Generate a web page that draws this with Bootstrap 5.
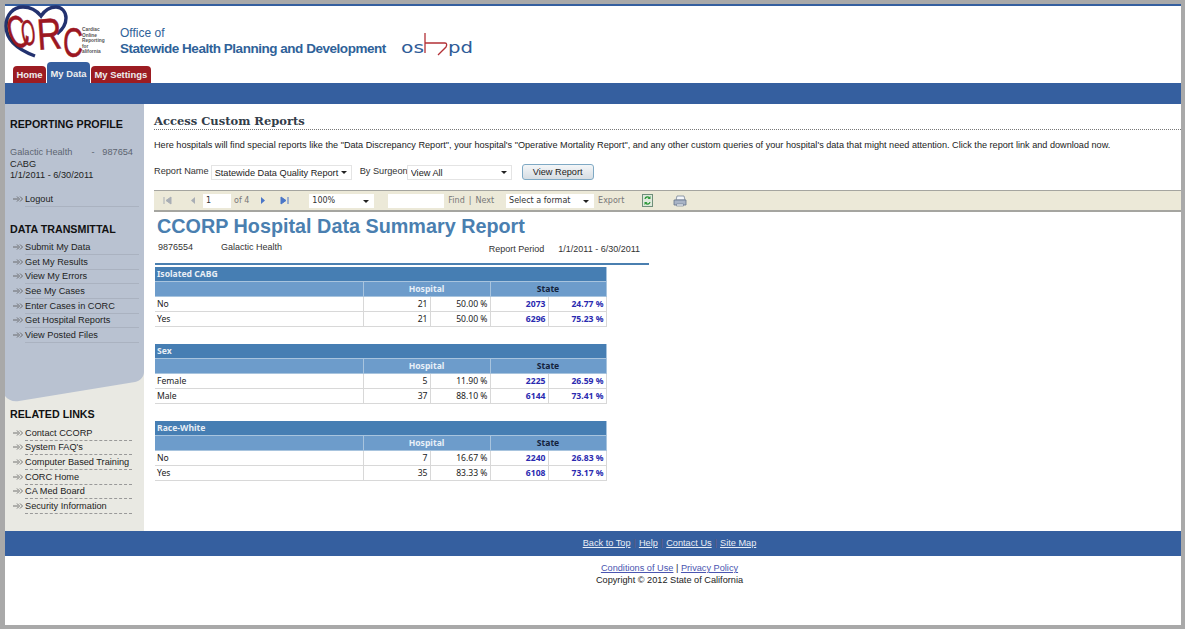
<!DOCTYPE html>
<html lang="en">
<head>
  <meta charset="UTF-8" />
  <title>CORC – Access Custom Reports</title>
  <link href="https://cdn.jsdelivr.net/npm/bootstrap@5.3.3/dist/css/bootstrap.min.css" rel="stylesheet" />
  <style>
    html, body { height: 100%; margin: 0; overflow: hidden; }
    body {
      background: #fff;
      font-family: "Liberation Sans", Arial, sans-serif;
      font-size: 9.2px;
      line-height: 1.2;
      color: #222;
    }
    .page-frame {
      height: 629px;
      border: solid #a9a9a9;
      border-width: 4px 4px 4px 5px;
    }
    .top-line { height: 2px; background: #355f9f; }
    .brand-row { height: 56px; }
    .office-title { margin-left: 15px; padding-top: 20px; color: #2f6299; font-size: 12px; line-height: 15px; }
    .office-title b { font-size: 13.5px; letter-spacing: -.47px; display: block; }
    .oshpd-logo { margin-left: 15px; margin-top: 27px; }
    .tab-row { height: 21px; padding-left: 8px; gap: 1px; align-items: flex-end; }
    .tab-link {
      display: block;
      height: 17px;
      padding: 3px 3.5px 0;
      background: #9c1c22;
      color: #eee;
      font-weight: 700;
      font-size: 9.4px;
      text-decoration: none;
      border-radius: 4px 4px 0 0;
    }
    .tab-link.tab-on { height: 21px; padding-top: 6px; background: #355f9f; }
    .blue-band { height: 21px; background: #355f9f; }
    .main-row { height: 427px; }
    .side-col { width: 139px; flex: none; background: #e9e9e3; }
    .side-blue { background: #b9c2d1; height: 264px; padding: 14px 5px 0; }
    .side-curve { display: block; margin-bottom: 6px; }
    .side-head { font-size: 10.7px; font-weight: 700; color: #111; margin: 0; line-height: 13px; }
    .profile-txt { margin-top: 16px; line-height: 11.5px; color: #222; }
    .profile-txt .dim { color: #5c6470; display: flex; justify-content: space-between; width: 123px; }
    .side-links { list-style: none; margin: 0; padding: 0; }
    .logout-list { margin-top: 11px; }
    .side-links li { display: flex; align-items: flex-end; height: 14.7px; }
    .side-links svg { flex: none; margin: 0 2px 5px 3px; }
    .side-links a {
      flex: 1;
      color: #222;
      text-decoration: none;
      padding-bottom: 1px;
      border-bottom: 1px solid #aab2c0;
      line-height: 12px;
    }
    .side-related { padding: 0 5px; }
    .side-related ul { margin-top: 5px; }
    .side-related a { border-bottom: 1px dashed #999; margin-right: 7px; }
    .report-col { flex: 1; min-width: 0; padding: 10px 0 0 10px; }
    .page-head {
      font-family: "DejaVu Serif", "Liberation Serif", serif;
      font-weight: 700;
      font-size: 11.5px;
      line-height: 14px;
      color: #333d4a;
      margin: 0;
      padding-bottom: 1px;
      border-bottom: 1px dotted #777;
    }
    .intro-txt { margin: 9px 0 0; font-size: 9.14px; line-height: 12px; color: #222; white-space: nowrap; }
    .filter-row { margin-top: 13px; height: 16px; color: #333; }
    .plain-select.form-select {
      height: 15px;
      padding: 0 3px;
      font-family: "Liberation Sans", Arial, sans-serif;
      font-size: 9.2px;
      line-height: 14px;
      color: #222;
      border: 1px solid #e4e4e4;
      border-radius: 0;
      background-image: none;
    }
    .sel-report { width: 141px; }
    .sel-surgeon { width: 105px; }
    .report-label { margin-right: 2px; }
    .surgeon-label { margin-left: 8px; margin-right: -1px; }
    .select-box { position: relative; display: block; }
    .select-box::after {
      content: "";
      position: absolute;
      right: 5px;
      top: 6px;
      border: 3px solid transparent;
      border-top: 3px solid #222;
      border-bottom: 0;
      pointer-events: none;
    }
    .view-btn.btn {
      width: 72px;
      height: 16px;
      padding: 0;
      margin-left: 10px;
      font-size: 9.2px;
      line-height: 13px;
      color: #222;
      border: 1px solid #7fa9c4;
      border-radius: 3px;
      background: linear-gradient(#f4f6f8, #d6dde3);
    }
    .tool-strip {
      margin-top: 10px;
      height: 22px;
      background: #ece9d8;
      border-top: 1px solid #a5a5a0;
      border-bottom: 2px solid #a5a5a0;
      color: #777;
      font-family: "DejaVu Sans", sans-serif;
      font-size: 8px;
      padding-left: 9px;
    }
    .tool-input { display: block; background: #fff; height: 14px; line-height: 14px; padding-left: 3px; color: #333; }
    .tool-input.page-no { width: 28px; margin: 0 3px 0 7px; }
    .tool-input.find-box { width: 56px; margin-left: 14px; margin-right: 4px; }
    .tool-select { position: relative; width: 65px; margin-left: 20px; }
    .tool-select.fmt-select { width: 88px; margin-left: 12px; }
    .tool-select::after {
      content: "";
      position: absolute;
      right: 5px;
      top: 6px;
      border: 3px solid transparent;
      border-top: 3px solid #222;
      border-bottom: 0;
    }
    .step-prev { margin-left: 18px; }
    .step-next { margin-left: 11px; }
    .step-last { margin-left: 14px; }
    .tool-refresh { margin-left: 18px; }
    .tool-print { margin-left: 20px; }
    .report-title { margin: 2px 0 0 3px; font-size: 19.8px; line-height: 24px; font-weight: 700; color: #4a7fb0; }
    .report-meta {
      width: 494px;
      margin-left: 1px;
      height: 27px;
      padding: 4px 9px 0 3px;
      font-size: 9px;
      color: #333;
      border-bottom: 2px solid #4a7fb0;
    }
    .meta-name { margin-left: 28px; }
    .meta-period { margin-top: 2px; }
    .meta-dates { margin-left: 14px; }
    .rpt-table.table {
      width: 451px;
      margin: 2px 0 17px 1px;
      table-layout: fixed;
      border-collapse: collapse;
      font-family: "Noto Sans", sans-serif;
      color: #222;
    }
    .rpt-table.table th, .rpt-table.table td {
      height: 15px;
      padding: 0 2px;
      line-height: 14px;
      border: solid #d8d8d8;
      border-width: 0 1px 1px 0;
      box-shadow: none;
      background: transparent;
      color: inherit;
      white-space: nowrap;
      font-size: 8.6px;
    }
    .rpt-table.table .rpt-title th { height: 14px; background: #467eb3; color: #e8eef5; font-weight: 700; border-color: #a8c4de; }
    .rpt-table.table .rpt-head th { background: #6d9ccb; color: #e8f0f8; text-align: center; border-color: #a8c4de; }
    .rpt-table.table .rpt-head th.state-col { color: #14233c; }
    .rpt-table.table td.num { text-align: right; }
    .rpt-table.table td.state-num { text-align: right; color: #2a2ab0; font-weight: 700; }
    .wid-label { width: 208px; }
    .wid-count { width: 67px; }
    .wid-pct { width: 60px; }
    .wid-state { width: 58px; }
    .foot-band {
      height: 25px;
      background: #355f9f;
      padding-left: 153px;
      gap: 3px;
      color: #6c5a78;
    }
    .foot-band a { color: #e9eef6; }
    .foot-legal { text-align: center; padding: 7px 0 0 153px; line-height: 11.5px; color: #222; }
    .foot-legal a { color: #4a55b0; }
  </style>
</head>
<body>
  <div class="page-frame d-flex flex-column">
    <div class="top-line"></div>

    <!-- logo row -->
    <div class="brand-row d-flex align-items-start">
      <svg class="overflow-visible" width="100" height="56" viewBox="0 0 100 56" aria-label="CORC logo">
        <path d="M30 50C14 44 1 34 1 20 1 9 8 1 18 1 26 1 32 5 36 10 40 4 46 1 51 1 57 1 61 6 61 12 61 18 57 24 52 28" fill="none" stroke="#23326f" stroke-width="3.4"/>
        <g font-family="Liberation Sans, sans-serif" fill="#9c1722" stroke="#9c1722" stroke-width=".5">
          <text transform="translate(8 44) rotate(-18) scale(.6 1)" font-size="46">C</text>
          <text transform="translate(18 40) rotate(-8) scale(.5 1)" font-size="36">O</text>
          <text transform="translate(33 44) rotate(-4) scale(.78 1)" font-size="44">R</text>
          <text transform="translate(58 51) scale(.66 1)" font-size="42">C</text>
        </g>
        <g font-family="Liberation Sans, sans-serif" font-size="4.8" font-weight="700" fill="#555">
          <text x="77" y="25">Cardiac</text>
          <text x="77" y="30.5">Online</text>
          <text x="77" y="36">Reporting</text>
          <text x="77" y="41.500">for</text>
          <text x="77" y="47">alifornia</text>
        </g>
      </svg>
      <div class="office-title">Office of<b>Statewide Health Planning and Development</b></div>
      <svg class="oshpd-logo" width="74" height="24" viewBox="0 0 74 24" aria-label="oshpd logo">
        <text x="0" y="20" font-family="DejaVu Sans, sans-serif" font-size="15" fill="#2f5c98" textLength="23" lengthAdjust="spacingAndGlyphs">os</text>
        <path d="M24 0V20M24 10H44C46 10 46 12 45 14L37 22" fill="none" stroke="#b23036" stroke-width="1.300"/>
        <text x="47" y="20" font-family="DejaVu Sans, sans-serif" font-size="15" fill="#2f5c98" textLength="25" lengthAdjust="spacingAndGlyphs">pd</text>
      </svg>
    </div>

    <!-- tabs -->
    <nav class="tab-row d-flex">
      <a class="tab-link" href="#">Home</a>
      <a class="tab-link tab-on" href="#">My Data</a>
      <a class="tab-link" href="#">My Settings</a>
    </nav>
    <div class="blue-band"></div>

    <div class="main-row d-flex">
      <!-- left column -->
      <aside class="side-col">
        <div class="side-blue">
          <h6 class="side-head">REPORTING PROFILE</h6>
          <div class="profile-txt">
            <div class="dim"><span>Galactic Health</span><span>-&nbsp;&nbsp;&nbsp;987654</span></div>
            <div>CABG</div>
            <div>1/1/2011 - 6/30/2011</div>
          </div>
          <ul class="side-links logout-list">
            <li><svg width="10" height="6" viewBox="0 0 10 6"><path d="M0 3H5M4 .5 6.5 3 4 5.5M7 .5 9.5 3 7 5.5" fill="none" stroke="#555" stroke-width=".8"/></svg><a href="#">Logout</a></li>
          </ul>
          <h6 class="side-head mt-3 mb-1">DATA TRANSMITTAL</h6>
          <ul class="side-links">
            <li><svg width="10" height="6" viewBox="0 0 10 6"><path d="M0 3H5M4 .5 6.5 3 4 5.5M7 .5 9.5 3 7 5.5" fill="none" stroke="#555" stroke-width=".8"/></svg><a href="#">Submit My Data</a></li>
            <li><svg width="10" height="6" viewBox="0 0 10 6"><path d="M0 3H5M4 .5 6.5 3 4 5.5M7 .5 9.5 3 7 5.5" fill="none" stroke="#555" stroke-width=".8"/></svg><a href="#">Get My Results</a></li>
            <li><svg width="10" height="6" viewBox="0 0 10 6"><path d="M0 3H5M4 .5 6.5 3 4 5.5M7 .5 9.5 3 7 5.5" fill="none" stroke="#555" stroke-width=".8"/></svg><a href="#">View My Errors</a></li>
            <li><svg width="10" height="6" viewBox="0 0 10 6"><path d="M0 3H5M4 .5 6.5 3 4 5.5M7 .5 9.5 3 7 5.5" fill="none" stroke="#555" stroke-width=".8"/></svg><a href="#">See My Cases</a></li>
            <li><svg width="10" height="6" viewBox="0 0 10 6"><path d="M0 3H5M4 .5 6.5 3 4 5.5M7 .5 9.5 3 7 5.5" fill="none" stroke="#555" stroke-width=".8"/></svg><a href="#">Enter Cases in CORC</a></li>
            <li><svg width="10" height="6" viewBox="0 0 10 6"><path d="M0 3H5M4 .5 6.5 3 4 5.5M7 .5 9.5 3 7 5.5" fill="none" stroke="#555" stroke-width=".8"/></svg><a href="#">Get Hospital Reports</a></li>
            <li><svg width="10" height="6" viewBox="0 0 10 6"><path d="M0 3H5M4 .5 6.5 3 4 5.5M7 .5 9.5 3 7 5.5" fill="none" stroke="#555" stroke-width=".8"/></svg><a href="#">View Posted Files</a></li>
          </ul>
        </div>
        <svg class="side-curve" width="139" height="34" viewBox="0 0 139 34">
          <path d="M0 0H139V4C139 9 135 13 130 14L14 33C8 34 3 32 0 28Z" fill="#b9c2d1"/>
        </svg>
        <div class="side-related">
          <h6 class="side-head">RELATED LINKS</h6>
          <ul class="side-links">
            <li><svg width="10" height="6" viewBox="0 0 10 6"><path d="M0 3H5M4 .5 6.5 3 4 5.5M7 .5 9.5 3 7 5.5" fill="none" stroke="#555" stroke-width=".8"/></svg><a href="#">Contact CCORP</a></li>
            <li><svg width="10" height="6" viewBox="0 0 10 6"><path d="M0 3H5M4 .5 6.5 3 4 5.5M7 .5 9.5 3 7 5.5" fill="none" stroke="#555" stroke-width=".8"/></svg><a href="#">System FAQ's</a></li>
            <li><svg width="10" height="6" viewBox="0 0 10 6"><path d="M0 3H5M4 .5 6.5 3 4 5.5M7 .5 9.5 3 7 5.5" fill="none" stroke="#555" stroke-width=".8"/></svg><a href="#">Computer Based Training</a></li>
            <li><svg width="10" height="6" viewBox="0 0 10 6"><path d="M0 3H5M4 .5 6.5 3 4 5.5M7 .5 9.5 3 7 5.5" fill="none" stroke="#555" stroke-width=".8"/></svg><a href="#">CORC Home</a></li>
            <li><svg width="10" height="6" viewBox="0 0 10 6"><path d="M0 3H5M4 .5 6.5 3 4 5.5M7 .5 9.5 3 7 5.5" fill="none" stroke="#555" stroke-width=".8"/></svg><a href="#">CA Med Board</a></li>
            <li><svg width="10" height="6" viewBox="0 0 10 6"><path d="M0 3H5M4 .5 6.5 3 4 5.5M7 .5 9.5 3 7 5.5" fill="none" stroke="#555" stroke-width=".8"/></svg><a href="#">Security Information</a></li>
          </ul>
        </div>
      </aside>

      <!-- report area -->
      <main class="report-col">
        <h1 class="page-head">Access Custom Reports</h1>
        <p class="intro-txt">Here hospitals will find special reports like the "Data Discrepancy Report", your hospital's "Operative Mortality Report", and any other custom queries of your hospital's data that might need attention. Click the report link and download now.</p>

        <div class="filter-row d-flex align-items-center">
          <span class="report-label">Report Name</span>
          <span class="select-box">
            <select class="form-select plain-select sel-report"><option>Statewide Data Quality Report</option></select>
          </span>
          <span class="surgeon-label">By Surgeon</span>
          <span class="select-box">
            <select class="form-select plain-select sel-surgeon"><option>View All</option></select>
          </span>
          <button type="button" class="btn view-btn">View Report</button>
        </div>

        <div class="tool-strip d-flex align-items-center">
          <svg width="9" height="9" viewBox="0 0 9 9"><path d="M1 1V8M8 1 3 4.500 8 8Z" fill="#a9aeb5" stroke="#a9aeb5"/></svg>
          <svg class="step-prev" width="6" height="9" viewBox="0 0 6 9"><path d="M5 1 1 4.500 5 8Z" fill="#a9aeb5"/></svg>
          <span class="tool-input page-no">1</span>
          <span>of 4</span>
          <svg class="step-next" width="6" height="9" viewBox="0 0 6 9"><path d="M1 1 5 4.500 1 8Z" fill="#4a76c8"/></svg>
          <svg class="step-last" width="9" height="9" viewBox="0 0 9 9"><path d="M1 1 6 4.500 1 8ZM8 1V8" fill="#4a76c8" stroke="#4a76c8"/></svg>
          <span class="tool-input tool-select">100%</span>
          <span class="tool-input find-box"></span>
          <span>Find</span><span class="mx-1">|</span><span>Next</span>
          <span class="tool-input tool-select fmt-select">Select a format</span>
          <span class="ms-1">Export</span>
          <svg class="tool-refresh" width="11" height="13" viewBox="0 0 11 13">
            <rect x=".5" y=".5" width="10" height="12" fill="#dfe9dc" stroke="#6f8f7a"/>
            <path d="M3 5a2.500 2.500 0 0 1 4.500-1M8 8a2.500 2.500 0 0 1-4.500 1" fill="none" stroke="#2f9a3a" stroke-width="1.300"/>
            <path d="M8.500 2V5H5.500ZM2.500 11V8H5.500Z" fill="#2f9a3a"/>
          </svg>
          <svg class="tool-print" width="14" height="12" viewBox="0 0 14 12">
            <path d="M4 1H11L12 5H3Z" fill="#f4f6fa" stroke="#7a8798" stroke-width=".8"/>
            <path d="M1 5H13V10H1Z" fill="#a9b4c6" stroke="#66758c" stroke-width=".8"/>
            <path d="M3.500 9H10.500V11H3.500Z" fill="#eef1f6" stroke="#66758c" stroke-width=".6"/>
          </svg>
        </div>

        <h2 class="report-title">CCORP Hospital Data Summary Report</h2>
        <div class="report-meta d-flex justify-content-between">
          <div><span>9876554</span><span class="meta-name">Galactic Health</span></div>
          <div class="meta-period"><span>Report Period</span><span class="meta-dates">1/1/2011 - 6/30/2011</span></div>
        </div>

        <table class="table rpt-table">
          <colgroup><col class="wid-label" /><col class="wid-count" /><col class="wid-pct" /><col class="wid-state" /><col class="wid-state" /></colgroup>
          <tr class="rpt-title"><th colspan="5">Isolated CABG</th></tr>
          <tr class="rpt-head"><th></th><th colspan="2">Hospital</th><th colspan="2" class="state-col">State</th></tr>
          <tr><td>No</td><td class="num">21</td><td class="num">50.00 %</td><td class="state-num">2073</td><td class="state-num">24.77 %</td></tr>
          <tr><td>Yes</td><td class="num">21</td><td class="num">50.00 %</td><td class="state-num">6296</td><td class="state-num">75.23 %</td></tr>
        </table>

        <table class="table rpt-table">
          <colgroup><col class="wid-label" /><col class="wid-count" /><col class="wid-pct" /><col class="wid-state" /><col class="wid-state" /></colgroup>
          <tr class="rpt-title"><th colspan="5">Sex</th></tr>
          <tr class="rpt-head"><th></th><th colspan="2">Hospital</th><th colspan="2" class="state-col">State</th></tr>
          <tr><td>Female</td><td class="num">5</td><td class="num">11.90 %</td><td class="state-num">2225</td><td class="state-num">26.59 %</td></tr>
          <tr><td>Male</td><td class="num">37</td><td class="num">88.10 %</td><td class="state-num">6144</td><td class="state-num">73.41 %</td></tr>
        </table>

        <table class="table rpt-table">
          <colgroup><col class="wid-label" /><col class="wid-count" /><col class="wid-pct" /><col class="wid-state" /><col class="wid-state" /></colgroup>
          <tr class="rpt-title"><th colspan="5">Race-White</th></tr>
          <tr class="rpt-head"><th></th><th colspan="2">Hospital</th><th colspan="2" class="state-col">State</th></tr>
          <tr><td>No</td><td class="num">7</td><td class="num">16.67 %</td><td class="state-num">2240</td><td class="state-num">26.83 %</td></tr>
          <tr><td>Yes</td><td class="num">35</td><td class="num">83.33 %</td><td class="state-num">6108</td><td class="state-num">73.17 %</td></tr>
        </table>
      </main>
    </div>

    <footer>
      <div class="foot-band d-flex align-items-center justify-content-center">
        <a href="#">Back to Top</a><span>|</span><a href="#">Help</a><span>|</span><a href="#">Contact Us</a><span>|</span><a href="#">Site Map</a>
      </div>
      <div class="foot-legal">
        <a href="#">Conditions of Use</a> | <a href="#">Privacy Policy</a><br />
        Copyright © 2012 State of California
      </div>
    </footer>
  </div>

  <script src="https://cdn.jsdelivr.net/npm/bootstrap@5.3.3/dist/js/bootstrap.bundle.min.js"></script>
</body>
</html>
